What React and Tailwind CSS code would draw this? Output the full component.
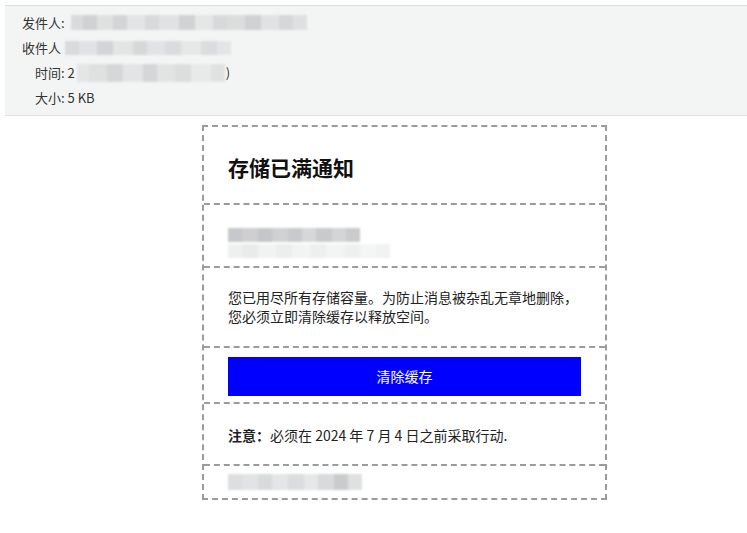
import React from "react";

const FONT = { fontFamily: '"Microsoft YaHei", "Noto Sans CJK SC", "Noto Sans", sans-serif' };

// pixelated blur placeholder for redacted text
function Redacted({ cells, className = "" }) {
  return (
    <span className={`inline-flex items-stretch align-middle blur-[1px] ${className}`}>
      {cells.map((c, i) => (
        <span key={i} className="inline-block" style={{ width: c[0], background: c[1] }} />
      ))}
    </span>
  );
}

const ROW_A = [
  [12, "#d9dbdc"], [14, "#cfd1d2"], [16, "#dfe1e1"], [14, "#d3d5d6"], [18, "#e3e4e5"], [14, "#d7d9da"],
  [20, "#e1e2e3"], [16, "#d0d2d3"], [18, "#e5e6e6"], [14, "#d8d9da"], [18, "#dcdede"], [16, "#cfd1d2"],
  [18, "#e1e2e3"], [14, "#d5d7d8"], [14, "#dfe0e1"],
];
const ROW_B = [
  [14, "#d8dadb"], [18, "#e0e2e3"], [16, "#d2d4d5"], [20, "#e3e5e5"], [14, "#d6d8d9"], [18, "#e2e3e4"],
  [16, "#d9dbdc"], [20, "#e6e7e7"], [16, "#dadcdd"], [14, "#e4e5e6"],
];
const ROW_C = [
  [12, "#e4e6e6"], [18, "#dfe1e1"], [16, "#d6d8d8"], [20, "#e3e4e5"], [14, "#d4d6d7"], [18, "#e2e4e4"],
  [16, "#dcdede"], [20, "#e8e9e9"], [14, "#e0e2e2"],
];
const CARD_A = [
  [14, "#c6c8cb"], [16, "#cfcfd1"], [14, "#c4c6c9"], [16, "#d0d1d2"], [14, "#c8cacd"], [14, "#d5d7d8"],
  [16, "#c9cacc"], [14, "#d4d5d6"], [14, "#cbcbcc"],
];
const CARD_B = [
  [14, "#eef0f0"], [16, "#e9ebeb"], [18, "#f1f2f2"], [16, "#eceeee"], [18, "#f2f3f3"], [16, "#eeeeef"],
  [18, "#f3f4f4"], [16, "#eeefef"], [16, "#f4f5f5"], [14, "#f1f2f2"],
];
const CARD_C = [
  [14, "#dcdedf"], [16, "#e2e3e4"], [14, "#d8dadb"], [16, "#e4e5e6"], [16, "#dadcdd"], [14, "#e6e7e8"],
  [16, "#d9dadc"], [14, "#c9cbcd"], [14, "#dfe0e1"],
];

export default function App() {
  return (
    <div className="min-h-[533px] w-[747px] bg-white text-[#222]" style={FONT}>
      <div className="h-[5px]" />
      <div className="ml-[5px] border-y border-[#dde0e0] bg-[#f3f5f5] pb-[5px] pt-[4px] text-[13px] leading-[25px] text-[#333]">
        <div className="flex items-center pl-[17px]">
          <span>发件人:</span>
          <Redacted cells={ROW_A} className="ml-[6px] h-[15px]" />
        </div>
        <div className="flex items-center pl-[17px]">
          <span>收件人</span>
          <Redacted cells={ROW_B} className="ml-[4px] h-[14px]" />
        </div>
        <div className="flex items-center pl-[30px]">
          <span>时间: 2</span>
          <Redacted cells={ROW_C} className="ml-[2px] h-[18px] rounded-[8px]" />
          <span className="ml-[1px]">)</span>
        </div>
        <div className="pl-[30px]">大小: 5 KB</div>
      </div>

      <div className="ml-[202px] mt-[9px] w-[405px] border-2 border-dashed border-[#9b9b9b] text-[14px]">
        <div className="border-b-2 border-dashed border-[#9b9b9b] px-6 pb-[23px] pt-[27px]">
          <h1 className="text-[21px] font-bold leading-[26px] text-[#111]">存储已满通知</h1>
        </div>
        <div className="flex h-[63px] flex-col justify-center border-b-2 border-dashed border-[#9b9b9b] px-6 pt-[14px]">
          <Redacted cells={CARD_A} className="h-[14px] w-fit rounded-r-[6px]" />
          <Redacted cells={CARD_B} className="mt-[2px] h-[14px] w-fit" />
        </div>
        <div className="border-b-2 border-dashed border-[#9b9b9b] px-6 py-[20px] leading-[19px] text-[#222]">
          <p>您已用尽所有存储容量。为防止消息被杂乱无章地删除，</p>
          <p>您必须立即清除缓存以释放空间。</p>
        </div>
        <div className="border-b-2 border-dashed border-[#9b9b9b] px-6 pb-[6px] pt-[9px]">
          <button className="flex h-[39px] w-full items-center justify-center bg-[#0000ff] text-[14px] text-white">
            清除缓存
          </button>
        </div>
        <div className="border-b-2 border-dashed border-[#9b9b9b] px-6 pb-[19px] pt-[22px] leading-[19px] text-[#222]">
          <span className="font-bold">注意：</span>必须在 2024 年 7 月 4 日之前采取行动.
        </div>
        <div className="flex h-[32px] items-center px-6">
          <Redacted cells={CARD_C} className="h-[16px] w-fit rounded-r-[10px]" />
        </div>
      </div>
    </div>
  );
}
